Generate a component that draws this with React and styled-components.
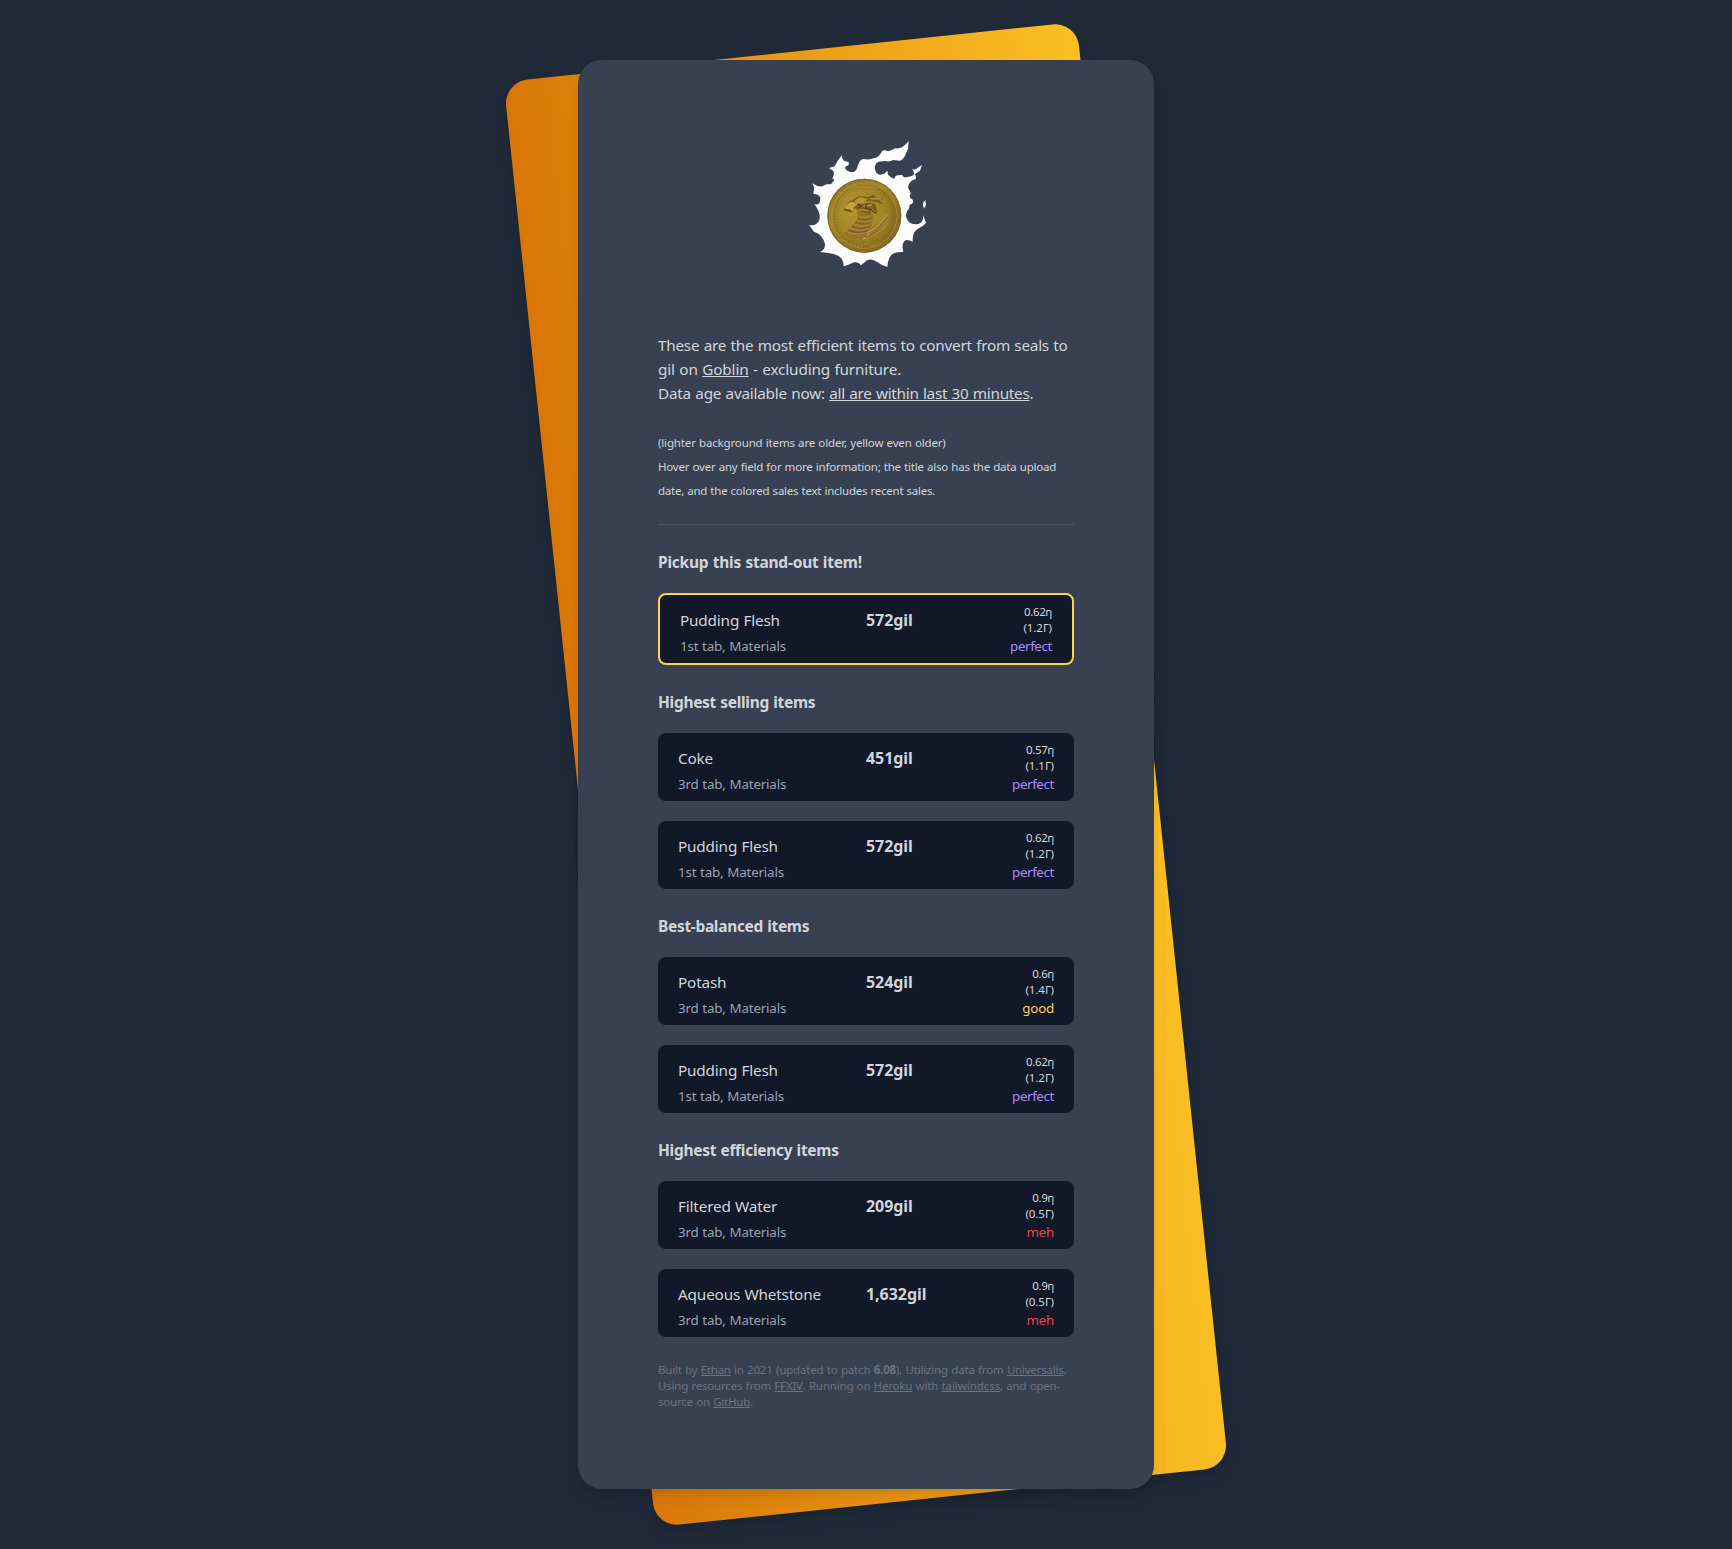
import React from "react";
import styled, { createGlobalStyle, css } from "styled-components";

const GlobalStyle = createGlobalStyle`
  *, *::before, *::after { box-sizing: border-box; }
  body {
    margin: 0;
    background: #1f2937;
    color: #d1d5db;
    font-family: "Segoe UI", "Noto Sans", "Open Sans", sans-serif;
  }
  h2, p { margin: 0; }
`;

const shadow = css`
  box-shadow: 0 10px 15px -3px rgba(0, 0, 0, 0.1), 0 4px 6px -2px rgba(0, 0, 0, 0.05);
`;

const Page = styled.main`
  display: flex;
  justify-content: center;
  padding: 60px 0;
  overflow: hidden;
`;

const Sheet = styled.div`
  position: relative;
  width: 576px;
`;

const Backdrop = styled.div`
  position: absolute;
  inset: -12px 0;
  border-radius: 24px;
  background: linear-gradient(to right, #d97706, #fbbf24);
  transform: rotate(-6deg);
  ${shadow}
`;

const Panel = styled.div`
  position: relative;
  height: 1429px;
  padding: 80px;
  border-radius: 24px;
  background: #374151;
  ${shadow}
`;

const LogoWrap = styled.div`
  display: flex;
  justify-content: center;
  margin-bottom: 65px;

  svg { display: block; width: 128px; height: 128px; }
`;

const Intro = styled.div`
  height: 192px;
  border-bottom: 1px solid #4b5563;
`;

const Paragraph = styled.p`
  font-size: 15.3px;
  line-height: 24px;
  word-spacing: 0.6px;
  & + & { margin-top: 24px; }
`;

const Line = styled.span`
  display: block;
  height: 24px;
  white-space: nowrap;
  letter-spacing: ${(p) => p.$ls}px;
`;

const SmallLine = styled(Line)`
  font-size: 11.5px;
  line-height: 28px;
  word-spacing: 0.4px;
`;

const Link = styled.a`
  color: inherit;
  text-decoration: underline;
  text-decoration-thickness: 1px;
  text-underline-offset: 1px;
  letter-spacing: ${(p) => p.$ls}px;
`;

const Section = styled.section`
  display: flex;
  flex-direction: column;
  gap: 20px;
  margin-top: 24px;
`;

const Title = styled.h2`
  height: 24px;
  font-size: 15.5px;
  font-weight: 700;
  line-height: 26px;
  word-spacing: 0.5px;
  letter-spacing: ${(p) => p.$ls}px;
`;

const Card = styled.article`
  display: grid;
  grid-template-columns: 2fr 1fr 1fr;
  grid-template-rows: 32px 20px;
  padding: 9px 20px 7px;
  border-radius: 8px;
  background: #111827;
  ${(p) => p.$highlight && css`border: 2px solid #fcd34d;`}
`;

const Name = styled.div`
  font-size: 15.3px;
  line-height: 32px;
  letter-spacing: -0.17px;
  word-spacing: 0.5px;
  white-space: nowrap;
`;

const Price = styled.div`
  font-size: 16px;
  font-weight: 700;
  line-height: 32px;
  letter-spacing: -0.05px;
`;

const Stats = styled.div`
  display: flex;
  flex-direction: column;
  align-items: flex-end;
  font-size: 11.5px;
  line-height: 16px;
`;

const Stat = styled.span`
  letter-spacing: ${(p) => p.$ls}px;
`;

const Place = styled.div`
  grid-column: 1 / 3;
  color: #9ca3af;
  font-size: 13.4px;
  line-height: 20px;
  letter-spacing: -0.2px;
  word-spacing: 0.5px;
`;

const ratingColors = { perfect: "#a78bfa", good: "#fcd34d", meh: "#ef4444" };

const Rating = styled.div`
  color: ${(p) => ratingColors[p.$rating]};
  font-size: 13.4px;
  line-height: 20px;
  letter-spacing: ${(p) => (p.$rating === "perfect" ? -0.4 : -0.25)}px;
  text-align: right;
`;

const Footer = styled.footer`
  margin-top: 25px;
  color: #6b7280;
  font-size: 11.5px;
  line-height: 16px;
  word-spacing: 0.5px;
`;

const FooterLine = styled.span`
  display: block;
  height: 16px;
  white-space: nowrap;
  letter-spacing: ${(p) => p.$ls}px;
`;

const flame =
  "M356 48L354 72L343 96Q336 107 328 107L310 105Q298 112 285 108L265 110Q254 117 254 130Q256 143 264 148Q274 151 285 145Q290 136 294 140Q290 150 302 156Q310 160 311 162L318 152Q330 148 338 151Q341 160 348 157Q362 156 370 151Q375 144 367 132Q378 136 383 128L396 120L390 137L375 148Q380 158 377 162Q364 165 359 173Q352 184 356 193Q366 204 359 213Q360 222 368 224Q371 233 366 236Q356 238 358 249Q348 259 348 271Q350 288 362 295Q380 301 393 293Q401 283 400 271L408 294Q398 305 386 310Q366 320 368 351Q353 341 343 348Q334 360 340 381Q318 379 306 388Q294 400 292 426Q276 423 262 411Q246 399 231 406Q218 417 213 421Q206 410 192 412Q174 421 161 424Q161 405 149 395Q135 385 115 384L90 381Q106 374 105 357Q98 328 72 320L57 300Q79 305 88 285Q93 262 73 238Q91 243 91 218Q88 207 70 206Q72 192 73 188L67 175Q82 186 97 184L110 178L123 178L131 168L133 163L127 162L132 146L130 138L117 129L134 124Q142 108 155 91Q158 107 164 108L176 111L176 121Q164 123 166 131Q172 141 190 141Q200 138 203 124Q209 103 220 102Q238 106 253 99Q267 97 277 77Q285 73 294 79Q304 78 315 70Q338 73 356 48Z";

function Logo() {
  return (
    <svg viewBox="36 45 384 384" role="img" aria-label="Gil coin">
      <defs>
        <linearGradient id="coin" x1="0.1" y1="0" x2="0.8" y2="1">
          <stop offset="0" stopColor="#92742a" />
          <stop offset="0.4" stopColor="#a68928" />
          <stop offset="0.7" stopColor="#927523" />
          <stop offset="1" stopColor="#866428" />
        </linearGradient>
        <radialGradient id="face" cx="0.4" cy="0.42" r="0.6">
          <stop offset="0" stopColor="#b3982f" />
          <stop offset="0.7" stopColor="#9f8425" />
          <stop offset="1" stopColor="#8c6e24" />
        </radialGradient>
      </defs>
      <path d={flame} fill="#fdfdfd" />
      <path d="M406 226Q397 233 399 241L402 251L408 239Z" fill="#fdfdfd" />
      <circle cx="223" cy="272" r="111" fill="url(#coin)" />
      <circle cx="223" cy="272" r="109" fill="none" stroke="#7d6024" strokeWidth="4" opacity="0.8" />
      <circle cx="223" cy="272" r="98" fill="url(#face)" stroke="#a98d36" strokeWidth="2" />
      <circle cx="223" cy="272" r="90" fill="none" stroke="#6b5319" strokeWidth="6" strokeDasharray="4 5" opacity="0.4" />
      <circle cx="223" cy="272" r="82" fill="none" stroke="#705819" strokeWidth="2" opacity="0.3" />
      <path d="M170 185L278 188M190 178L212 190L224 180L236 190L255 178" fill="none" stroke="#c1a144" strokeWidth="3" opacity="0.3" />
      <path d="M201 258Q209 281 189 300L162 327Q190 348 229 343Q268 333 293 287L291 267Q266 299 241 309Q251 291 249 265Z" fill="#96752a" />
      <path d="M163 253Q172 228 188 225L206 213L235 216L251 208L258 219L279 220L269 229L278 238L256 235L264 266L247 252L239 268L208 258L193 250L190 261L178 254Z" fill="#7e601e" />
      <path d="M163 251Q173 231 188 230L202 239L190 247L191 260L177 252Z" fill="#c8a63e" />
      <path d="M192 229L207 217L234 221L221 233L199 238Z" fill="#b6952f" />
      <path d="M214 235L240 230M220 244L246 240M238 221L273 222M242 231L267 236M206 253L235 257" fill="none" stroke="#b5953c" strokeWidth="4" />
      <path d="M202 237L213 243L207 251M230 235L226 250L243 254L257 266M162 253L185 259" fill="none" stroke="#523e14" strokeWidth="3.5" />
      <path d="M204 273Q222 282 244 272M199 284Q220 297 244 286M191 297Q215 310 239 299M181 310Q210 322 234 309M173 322Q205 333 234 321" fill="none" stroke="#b39040" strokeWidth="2.5" />
      <path d="M202 279Q222 290 245 280M195 291Q216 303 241 292M186 304Q211 316 236 305M175 316Q207 328 232 316" fill="none" stroke="#70531c" strokeWidth="2.5" />
      <path d="M232 323Q270 303 291 268M230 331Q271 315 294 281M219 342Q265 329 294 292" fill="none" stroke="#bd9a48" strokeWidth="4" />
      <path d="M238 329Q275 308 293 278M229 338Q267 322 295 288" fill="none" stroke="#75571f" strokeWidth="2.5" />
      <path d="M180 356L208 365L230 355L249 364L270 349" fill="none" stroke="#b58f3b" strokeWidth="4" strokeDasharray="7 4" opacity="0.7" />
    </svg>
  );
}

const pudding = { name: "Pudding Flesh", price: "572", eff: "0.62", ratio: "1.2", tab: "1st", rating: "perfect" };

const sections = [
  { title: "Pickup this stand-out item!", ls: -0.22, highlight: true, items: [pudding] },
  {
    title: "Highest selling items",
    ls: -0.3,
    items: [{ name: "Coke", price: "451", eff: "0.57", ratio: "1.1", tab: "3rd", rating: "perfect" }, pudding],
  },
  {
    title: "Best-balanced items",
    ls: -0.32,
    items: [{ name: "Potash", price: "524", eff: "0.6", ratio: "1.4", tab: "3rd", rating: "good" }, pudding],
  },
  {
    title: "Highest efficiency items",
    ls: -0.28,
    items: [
      { name: "Filtered Water", price: "209", eff: "0.9", ratio: "0.5", tab: "3rd", rating: "meh" },
      { name: "Aqueous Whetstone", price: "1,632", eff: "0.9", ratio: "0.5", tab: "3rd", rating: "meh" },
    ],
  },
];

function ItemCard({ item, highlight }) {
  return (
    <Card $highlight={highlight}>
      <Name>{item.name}</Name>
      <Price>{item.price}gil</Price>
      <Stats>
        <Stat $ls={-0.36}>{item.eff}η</Stat>
        <Stat $ls={-0.05}>({item.ratio}Γ)</Stat>
      </Stats>
      <Place>{item.tab} tab, Materials</Place>
      <Rating $rating={item.rating}>{item.rating}</Rating>
    </Card>
  );
}

export default function App() {
  return (
    <>
      <GlobalStyle />
      <Page>
        <Sheet>
          <Backdrop />
          <Panel>
            <LogoWrap>
              <Logo />
            </LogoWrap>
            <Intro>
              <Paragraph>
                <Line $ls={-0.24}>These are the most efficient items to convert from seals to</Line>
                <Line $ls={-0.15}>
                  gil on <Link $ls={-0.1}>Goblin</Link> - excluding furniture.
                </Line>
                <Line $ls={-0.23}>
                  Data age available now: <Link $ls={-0.27}>all are within last 30 minutes</Link>.
                </Line>
              </Paragraph>
              <Paragraph>
                <SmallLine $ls={-0.15}>(lighter background items are older, yellow even older)</SmallLine>
                <SmallLine $ls={-0.2}>
                  Hover over any field for more information; the title also has the data upload
                </SmallLine>
                <SmallLine $ls={-0.23}>date, and the colored sales text includes recent sales.</SmallLine>
              </Paragraph>
            </Intro>
            {sections.map((s) => (
              <Section key={s.title}>
                <Title $ls={s.ls}>{s.title}</Title>
                {s.items.map((item) => (
                  <ItemCard key={item.name} item={item} highlight={s.highlight} />
                ))}
              </Section>
            ))}
            <Footer>
              <FooterLine $ls={-0.17}>
                Built by <Link $ls={-0.28}>Ethan</Link> in 2021 (updated to patch <b>6.08</b>), Utilizing data from{" "}
                <Link $ls={-0.2}>Universalis</Link>,
              </FooterLine>
              <FooterLine $ls={-0.19}>
                Using resources from <Link $ls={-0.2}>FFXIV</Link>. Running on <Link $ls={-0.18}>Heroku</Link> with{" "}
                <Link $ls={-0.05}>tailwindcss</Link>, and open-
              </FooterLine>
              <FooterLine $ls={-0.2}>
                source on <Link $ls={-0.2}>GitHub</Link>.
              </FooterLine>
            </Footer>
          </Panel>
        </Sheet>
      </Page>
    </>
  );
}
